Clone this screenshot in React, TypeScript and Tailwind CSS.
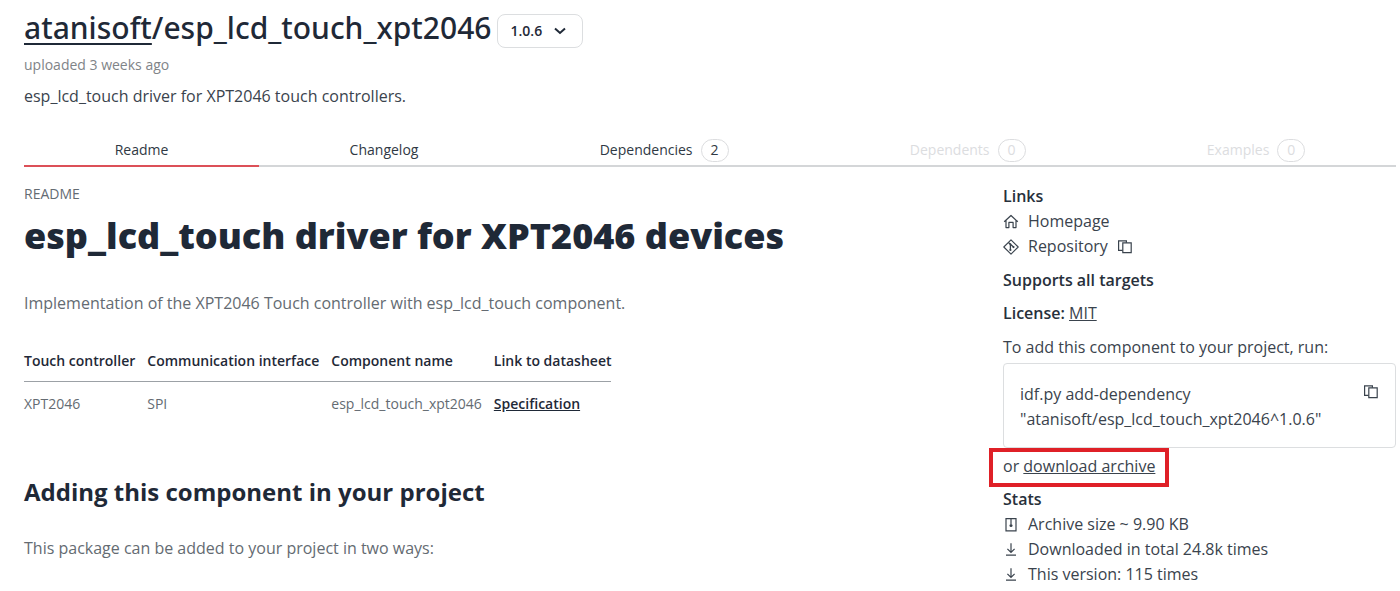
import React from "react";

function HomeIcon() {
  return (
    <svg className="size-4" viewBox="0 0 16 16" fill="none" stroke="currentColor" strokeWidth="1.2" strokeLinejoin="round" aria-hidden="true">
      <path d="M1.2 7.8 8 1.5l6.8 6.3M3 6.6v7h2.9V8.4h4.2v5.2H13v-7" />
    </svg>
  );
}

function GitIcon() {
  return (
    <svg className="size-4" viewBox="0 0 16 16" fill="none" stroke="currentColor" strokeWidth="1.1" aria-hidden="true">
      <path d="M8 .8 15.2 8 8 15.2.8 8Z" strokeLinejoin="round" />
      <path d="M5.4 3.4 10.6 8M7.4 5.2v5.8" strokeWidth="1.3" />
      <circle cx="7.4" cy="5.2" r="1" fill="currentColor" stroke="none" />
      <circle cx="7.4" cy="11" r="1.1" fill="currentColor" stroke="none" />
      <circle cx="10.5" cy="8.1" r="1.1" fill="currentColor" stroke="none" />
    </svg>
  );
}

function CopyIcon() {
  return (
    <svg className="size-4" viewBox="0 0 16 16" fill="none" stroke="currentColor" strokeWidth="1.2" aria-hidden="true">
      <path d="M5.6 11.3H1.6V1.8h7.8v2" />
      <path d="M5.8 3.8h8.4v9.8H5.8Z" />
    </svg>
  );
}

function ArchiveIcon() {
  return (
    <svg className="size-4" viewBox="0 0 16 16" fill="none" stroke="currentColor" strokeWidth="1.2" aria-hidden="true">
      <path d="M3 1.6h10v12.2H3ZM8 2v5" />
      <circle cx="8" cy="8.6" r="1.5" fill="currentColor" stroke="none" />
    </svg>
  );
}

function DownloadIcon() {
  return (
    <svg className="size-4" viewBox="0 0 16 16" fill="none" stroke="currentColor" strokeWidth="1.2" aria-hidden="true">
      <path d="M8 1.2v9M4.4 6.8 8 10.4l3.6-3.6M3 13.2h10" />
    </svg>
  );
}

const tabs = [
  { label: "Readme", active: true },
  { label: "Changelog" },
  { label: "Dependencies", count: 2 },
  { label: "Dependents", count: 0, disabled: true },
  { label: "Examples", count: 0, disabled: true },
];

function Tabs() {
  return (
    <nav className="flex border-b-2 border-[#d4d6d8] text-sm leading-6" role="tablist">
      {tabs.map((t) => (
        <button
          key={t.label}
          type="button"
          role="tab"
          aria-selected={!!t.active}
          disabled={t.disabled}
          className={
            "-mb-0.5 flex h-8 grow items-center justify-center gap-2 border-b-2 px-[18px] " +
            (t.active ? "border-[#dc5058]" : "border-transparent") +
            (t.disabled ? " text-[#dcdddf]" : " text-[#2f3944]")
          }
        >
          {t.label}
          {t.count !== undefined && (
            <span className="flex h-[23px] w-7 items-center justify-center rounded-full border border-[#dcdddf]">{t.count}</span>
          )}
        </button>
      ))}
    </nav>
  );
}

export default function App() {
  return (
    <div className="bg-white pt-2 pr-1 pl-6 font-['Open_Sans','Noto_Sans',sans-serif] text-base text-[#3a434d]">
      <header>
        <div className="flex items-center gap-1.5">
          <h1 className="font-['Noto_Sans','Open_Sans',sans-serif] text-[30px] leading-10 font-medium text-[#1f2937]">
            <a href="#owner" className="underline decoration-2 underline-offset-4">atanisoft</a>/esp_lcd_touch_xpt2046
          </h1>
          <button type="button" className="mt-1.5 flex h-[34px] items-center gap-3 rounded-lg border border-[#dcdee0] pr-4 pl-3 text-sm font-semibold text-[#1f2937]">
            1.0.6
            <svg className="size-3" viewBox="0 0 12 12" fill="none" stroke="currentColor" strokeWidth="2" aria-hidden="true">
              <path d="m1 3.5 5 4.5 5-4.5" />
            </svg>
          </button>
        </div>
        <p className="mt-[5px] text-sm leading-6 text-[#7f8488]">uploaded 3 weeks ago</p>
        <p className="mt-[7px] leading-6">esp_lcd_touch driver for XPT2046 touch controllers.</p>
      </header>
      <div className="mt-[27px]">
        <Tabs />
      </div>
      <div className="flex justify-between gap-6 pt-[15px]">
        <main className="min-w-0 text-[#646b72]">
          <p className="text-sm leading-6">README</p>
          <h2 className="mt-1.5 text-4xl leading-12 font-extrabold text-[#1f2937]">esp_lcd_touch driver for XPT2046 devices</h2>
          <p className="mt-[31px] leading-6">Implementation of the XPT2046 Touch controller with esp_lcd_touch component.</p>
          <table className="mt-[34px] text-left text-sm leading-6">
            <thead className="border-b border-[#9ca1a6] text-[#1f2937]">
              <tr>
                <th className="pr-3 pb-2 font-semibold">Touch controller</th>
                <th className="pr-3 pb-2 font-semibold">Communication interface</th>
                <th className="pr-3 pb-2 font-semibold">Component name</th>
                <th className="pb-2 font-semibold">Link to datasheet</th>
              </tr>
            </thead>
            <tbody>
              <tr>
                <td className="pt-2.5 pr-3">XPT2046</td>
                <td className="pt-2.5 pr-3">SPI</td>
                <td className="pt-2.5 pr-3">esp_lcd_touch_xpt2046</td>
                <td className="pt-2.5"><a href="#datasheet" className="font-semibold text-[#1f2937] underline">Specification</a></td>
              </tr>
            </tbody>
          </table>
          <h3 className="mt-15 text-2xl leading-8 font-bold text-[#1f2937]">Adding this component in your project</h3>
          <p className="mt-7 leading-6">This package can be added to your project in two ways:</p>
        </main>
        <aside className="w-[393px] shrink-0 pt-0.5 leading-[25px]">
          <h4 className="font-semibold text-[#27303b]">Links</h4>
          <a href="#home" className="flex items-center gap-[9px]"><HomeIcon />Homepage</a>
          <div className="flex items-center gap-[9px]">
            <GitIcon />
            <a href="#repo">Repository</a>
            <button type="button" aria-label="Copy repository address"><CopyIcon /></button>
          </div>
          <h4 className="mt-[9px] font-semibold text-[#27303b]">Supports all targets</h4>
          <p className="mt-2"><span className="font-semibold text-[#27303b]">License:</span> <a href="#mit" className="underline">MIT</a></p>
          <p className="mt-[9px]">To add this component to your project, run:</p>
          <div className="mt-[3px] flex items-start justify-between rounded border border-[#dcdee0] px-4 pt-[18px] pb-[15px]">
            <code className="font-['Open_Sans','Noto_Sans',sans-serif]">idf.py add-dependency<br />"atanisoft/esp_lcd_touch_xpt2046^1.0.6"</code>
            <button type="button" aria-label="Copy command" className="pt-0.5"><CopyIcon /></button>
          </div>
          <p className="-ml-[14px] w-fit border-4 border-[#df2027] px-[10px] pt-0.5 pb-1">or <a href="#archive" className="underline">download archive</a></p>
          <h4 className="font-semibold text-[#27303b]">Stats</h4>
          <p className="flex items-center gap-[9px]"><ArchiveIcon />Archive size ~ 9.90 KB</p>
          <p className="flex items-center gap-[9px]"><DownloadIcon />Downloaded in total 24.8k times</p>
          <p className="flex items-center gap-[9px]"><DownloadIcon />This version: 115 times</p>
        </aside>
      </div>
    </div>
  );
}
